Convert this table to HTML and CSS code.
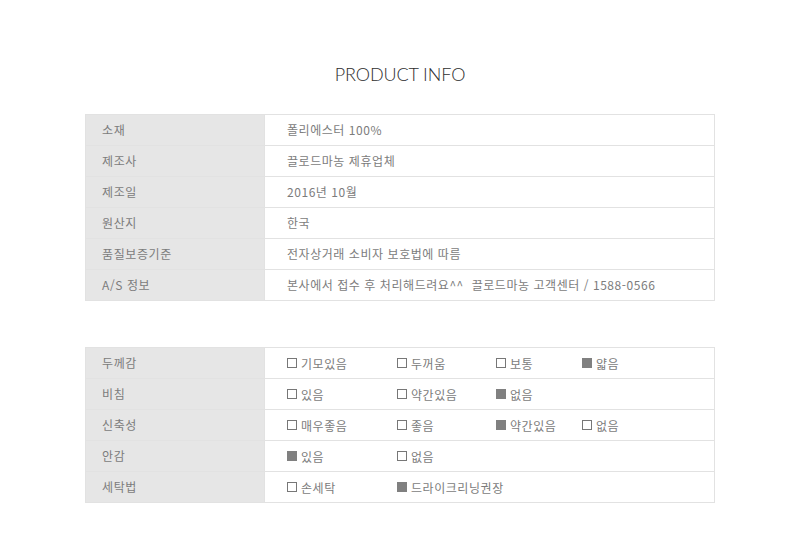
FILE: index.html
```html
<!DOCTYPE html>
<html lang="ko">
<head>
<meta charset="utf-8">
<link rel="stylesheet" href="styles.css">
</head>
<body>
<div class="page">
  <h2 class="title">PRODUCT INFO</h2>
  <div class="table">
    <div class="row"><div class="label">소재</div><div class="value">폴리에스터 100%</div></div>
    <div class="row"><div class="label">제조사</div><div class="value">끌로드마농 제휴업체</div></div>
    <div class="row"><div class="label">제조일</div><div class="value">2016년 10월</div></div>
    <div class="row"><div class="label">원산지</div><div class="value">한국</div></div>
    <div class="row"><div class="label">품질보증기준</div><div class="value">전자상거래 소비자 보호법에 따름</div></div>
    <div class="row"><div class="label">A/S 정보</div><div class="value">본사에서 접수 후 처리해드려요^^&nbsp; 끌로드마농 고객센터 / 1588-0566</div></div>
  </div>

  <div class="table table2">
    <div class="row"><div class="label">두께감</div><div class="value opts">
      <span class="opt"><i class="box"></i>기모있음</span>
      <span class="opt"><i class="box"></i>두꺼움</span>
      <span class="opt"><i class="box"></i>보통</span>
      <span class="opt"><i class="box on"></i>얇음</span>
    </div></div>
    <div class="row"><div class="label">비침</div><div class="value opts">
      <span class="opt"><i class="box"></i>있음</span>
      <span class="opt"><i class="box"></i>약간있음</span>
      <span class="opt"><i class="box on"></i>없음</span>
    </div></div>
    <div class="row"><div class="label">신축성</div><div class="value opts">
      <span class="opt"><i class="box"></i>매우좋음</span>
      <span class="opt"><i class="box"></i>좋음</span>
      <span class="opt"><i class="box on"></i>약간있음</span>
      <span class="opt"><i class="box"></i>없음</span>
    </div></div>
    <div class="row"><div class="label">안감</div><div class="value opts">
      <span class="opt"><i class="box on"></i>있음</span>
      <span class="opt"><i class="box"></i>없음</span>
    </div></div>
    <div class="row"><div class="label">세탁법</div><div class="value opts">
      <span class="opt"><i class="box"></i>손세탁</span>
      <span class="opt wide"><i class="box on"></i>드라이크리닝권장</span>
    </div></div>
  </div>
</div>
</body>
</html>
```

FILE: styles.css
```css
html, body {
  margin: 0;
  padding: 0;
  background: #fff;
}
body {
  font-family: "Noto Sans CJK KR", "Noto Sans", sans-serif;
  font-size: 12px;
  color: #7c7c7c;
}
.page {
  width: 630px;
  margin: 0 auto;
  padding-top: 64px;
}
.title {
  margin: 0 0 30px;
  text-align: center;
  font-family: "Lato", "Open Sans", sans-serif;
  font-weight: 300;
  font-size: 18px;
  line-height: 20px;
  letter-spacing: -0.1px;
  color: #2e2e2e;
}
.table {
  border: 1px solid #e2e2e2;
  border-bottom: none;
}
.table2 {
  margin-top: 46px;
}
.row {
  display: flex;
  height: 30px;
  border-bottom: 1px solid #e2e2e2;
}
.label {
  width: 162px;
  flex: none;
  background: #e6e6e6;
  padding-left: 16px;
  line-height: 29px;
  letter-spacing: 0.6px;
  border-right: 1px solid #e2e2e2;
}
.value {
  flex: 1;
  padding-left: 22px;
  line-height: 29px;
  letter-spacing: 0.55px;
}
.opts {
  display: grid;
  grid-template-columns: 110px 99px 86px auto;
  align-items: center;
}
.opt {
  display: flex;
  align-items: center;
  white-space: nowrap;
}
.wide {
  grid-column: span 3;
}
.box {
  flex: none;
  display: inline-block;
  width: 10px;
  height: 10px;
  border: 1px solid #777;
  margin-right: 4px;
  box-sizing: border-box;
}
.box.on {
  background: #808080;
  border-color: #808080;
}
```
